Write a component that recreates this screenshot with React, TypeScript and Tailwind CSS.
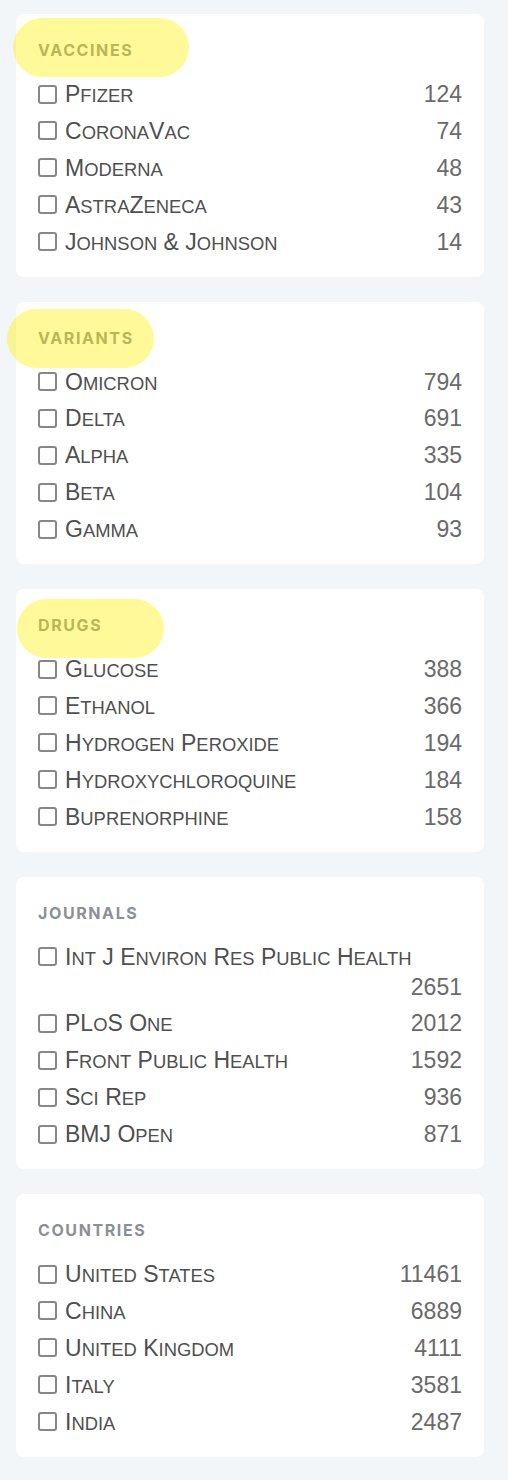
import React from "react";

type Facet = {
  title: string;
  items: [string, number][];
  // highlighter mark drawn over the heading
  mark?: string;
};

const facets: Facet[] = [
  {
    title: "Vaccines",
    mark: "left-[-3px] top-[4px] w-[176px]",
    items: [
      ["Pfizer", 124],
      ["CoronaVac", 74],
      ["Moderna", 48],
      ["AstraZeneca", 43],
      ["Johnson & Johnson", 14],
    ],
  },
  {
    title: "Variants",
    mark: "left-[-9px] top-[7px] w-[147px]",
    items: [
      ["Omicron", 794],
      ["Delta", 691],
      ["Alpha", 335],
      ["Beta", 104],
      ["Gamma", 93],
    ],
  },
  {
    title: "Drugs",
    mark: "left-[1px] top-[10px] w-[147px]",
    items: [
      ["Glucose", 388],
      ["Ethanol", 366],
      ["Hydrogen Peroxide", 194],
      ["Hydroxychloroquine", 184],
      ["Buprenorphine", 158],
    ],
  },
  {
    title: "Journals",
    items: [
      ["Int J Environ Res Public Health", 2651],
      ["PLoS One", 2012],
      ["Front Public Health", 1592],
      ["Sci Rep", 936],
      ["BMJ Open", 871],
    ],
  },
  {
    title: "Countries",
    items: [
      ["United States", 11461],
      ["China", 6889],
      ["United Kingdom", 4111],
      ["Italy", 3581],
      ["India", 2487],
    ],
  },
];

// small caps by hand: lowercase letters become smaller capitals
function SmallCaps({ text }: { text: string }) {
  const parts: { small: boolean; s: string }[] = [];
  for (const ch of text) {
    const small = ch !== ch.toUpperCase();
    const last = parts[parts.length - 1];
    if (last && last.small === small) last.s += ch;
    else parts.push({ small, s: ch });
  }
  return (
    <span>
      {parts.map((p, i) =>
        p.small ? (
          <span key={i} className="text-[0.8em] leading-none uppercase">
            {p.s}
          </span>
        ) : (
          <span key={i}>{p.s}</span>
        )
      )}
    </span>
  );
}

function FacetCard({ facet }: { facet: Facet }) {
  return (
    <div className="relative rounded-lg bg-white px-[22px] pt-[22px] pb-[20px]">
      <h3 className="mb-[15px] text-[16px] leading-[28px] font-bold uppercase tracking-[1.6px] text-[#8b9095] [font-family:Inter,sans-serif]">
        {facet.title}
      </h3>
      <ul className="flex flex-col gap-[6.875px]">
        {facet.items.map(([name, count]) => (
          <li
            key={name}
            className="flex flex-wrap items-center text-[23px] leading-[30px] [font-family:'Liberation_Sans',Arial,sans-serif]"
          >
            <label className="flex h-[30px] items-center gap-[8px] text-[#4f4f4f]">
              <input
                type="checkbox"
                className="h-[19px] w-[19px] appearance-none rounded-[3px] border-2 border-[#878787] bg-white"
              />
              <SmallCaps text={name} />
            </label>
            <span className="ml-auto text-[#6a6a6a]">{count}</span>
          </li>
        ))}
      </ul>
      {facet.mark && (
        <div
          className={`pointer-events-none absolute h-[59px] rounded-full bg-[rgba(255,240,0,0.4)] ${facet.mark}`}
        />
      )}
    </div>
  );
}

export default function App() {
  return (
    <div className="min-h-[1480px] bg-[#f3f6f9] pl-4 pr-6 pt-[14px] pb-6">
      <div className="flex flex-col gap-[25px]">
        {facets.map((f) => (
          <FacetCard key={f.title} facet={f} />
        ))}
      </div>
    </div>
  );
}
